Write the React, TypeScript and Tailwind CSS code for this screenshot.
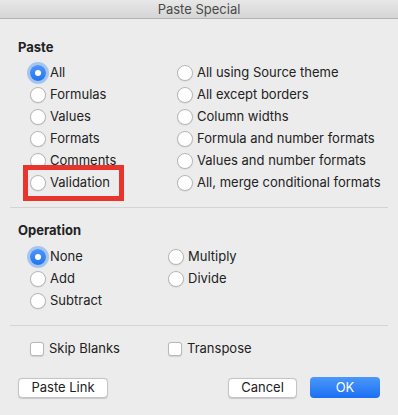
import React from "react";

const font = { fontFamily: "Inter, 'Liberation Sans', sans-serif" };

function Radio({ checked, label }: { checked?: boolean; label: string }) {
  return (
    <div className="flex items-center h-[22px]">
      {checked ? (
        <span className="w-[16px] h-[16px] rounded-full bg-gradient-to-b from-[#4d97f8] to-[#1f72f3] flex items-center justify-center shadow-[0_0_0_3px_rgba(80,150,245,0.45)] shrink-0">
          <span className="w-[6px] h-[6px] rounded-full bg-white" />
        </span>
      ) : (
        <span className="w-[16px] h-[16px] rounded-full bg-white border border-[#b8b8b8] shadow-[0_0.5px_1px_rgba(0,0,0,0.12)] shrink-0" />
      )}
      <span className="ml-[4px] text-[13px] text-[#222222] whitespace-nowrap">{label}</span>
    </div>
  );
}

function Checkbox({ label }: { label: string }) {
  return (
    <div className="flex items-center h-[22px]">
      <span className="w-[14px] h-[14px] rounded-[3px] bg-white border border-[#b8b8b8] shadow-[0_0.5px_1px_rgba(0,0,0,0.12)] shrink-0" />
      <span className="ml-[5px] text-[13px] text-[#222222] whitespace-nowrap">{label}</span>
    </div>
  );
}

export default function App() {
  return (
    <div className="w-[398px] h-[415px] bg-[#ececec] flex flex-col" style={font}>
      <div className="h-[19px] bg-gradient-to-b from-[#e8e8e8] to-[#d5d5d5] border-b border-[#b3b3b3] flex items-center justify-center">
        <span className="text-[13px] text-[#4a4a4a] leading-none">Paste Special</span>
      </div>

      <div className="pl-[18px] mt-[21px] h-[16px] flex items-center text-[13px] font-bold text-[#222222]">Paste</div>
      <div className="flex mt-[6px] pl-[30px]">
        <div className="w-[147px] flex flex-col">
          <Radio checked label="All" />
          <Radio label="Formulas" />
          <Radio label="Values" />
          <Radio label="Formats" />
          <Radio label="Comments" />
          <div className="relative">
            <Radio label="Validation" />
            <div className="absolute left-[-7px] top-[-7px] w-[101px] h-[36px] border-[5px] border-[#e8342c] pointer-events-none" />
          </div>
        </div>
        <div className="flex flex-col">
          <Radio label="All using Source theme" />
          <Radio label="All except borders" />
          <Radio label="Column widths" />
          <Radio label="Formula and number formats" />
          <Radio label="Values and number formats" />
          <Radio label="All, merge conditional formats" />
        </div>
      </div>

      <div className="mx-[10px] mt-[13px] h-px bg-[#d4d4d4]" />

      <div className="pl-[18px] mt-[15px] h-[16px] flex items-center text-[13px] font-bold text-[#222222]">Operation</div>
      <div className="flex mt-[7px] pl-[30px]">
        <div className="w-[138px] flex flex-col">
          <Radio checked label="None" />
          <Radio label="Add" />
          <Radio label="Subtract" />
        </div>
        <div className="flex flex-col">
          <Radio label="Multiply" />
          <Radio label="Divide" />
        </div>
      </div>

      <div className="mx-[10px] mt-[13px] h-px bg-[#d4d4d4]" />

      <div className="flex mt-[12px] pl-[30px]">
        <div className="w-[138px]">
          <Checkbox label="Skip Blanks" />
        </div>
        <Checkbox label="Transpose" />
      </div>

      <div className="flex mt-[17px] px-[18px] items-center">
        <button className="w-[90px] h-[20px] rounded-[4px] bg-white border border-[#c4c4c4] shadow-[0_0.5px_1px_rgba(0,0,0,0.15)] text-[13px] text-[#222222] flex items-center justify-center">
          Paste Link
        </button>
        <div className="flex-1" />
        <button className="w-[69px] h-[20px] rounded-[4px] bg-white border border-[#c4c4c4] shadow-[0_0.5px_1px_rgba(0,0,0,0.15)] text-[13px] text-[#222222] flex items-center justify-center">
          Cancel
        </button>
        <button className="ml-[13px] w-[70px] h-[21px] rounded-[4px] bg-gradient-to-b from-[#4a98f8] to-[#1a6ef3] text-[13px] text-white flex items-center justify-center">
          OK
        </button>
      </div>
    </div>
  );
}
